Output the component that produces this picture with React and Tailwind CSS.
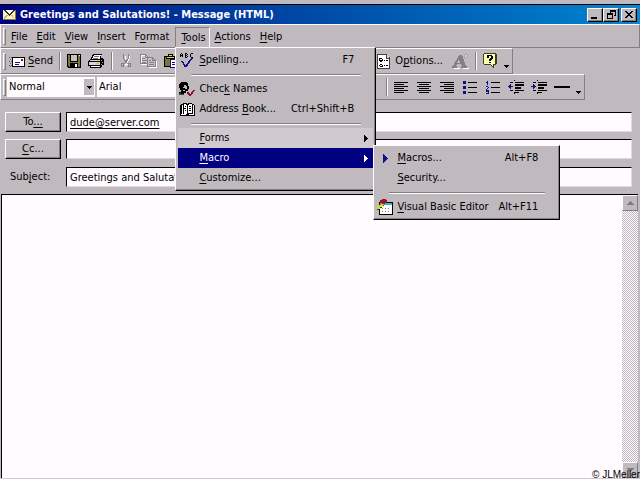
import React from "react";

const U = ({ children }) => <span className="underline underline-offset-2">{children}</span>;

const raised = "border border-t-[#fffbff] border-l-[#fffbff] border-r-[#808080] border-b-[#808080]";
const popup =
  "absolute z-10 border border-t-[#fffbff] border-l-[#fffbff] border-r-black border-b-black bg-[#c0babf] p-[2px] shadow-[inset_-1px_-1px_0_#808080]";

function Svg({ w, h, children, className = "" }) {
  return (
    <svg width={w} height={h} viewBox={`0 0 ${w} ${h}`} shapeRendering="crispEdges" fill="none" aria-hidden="true" className={`shrink-0 ${className}`}>
      {children}
    </svg>
  );
}

const MailIcon = () => (
  <Svg w={14} h={12}>
    <path d="M0 1h13v10H0z" fill="#fff4b8" />
    <path d="M1 1h11v1h-1v1h-1v1H9v1H8v1H7v1H6V6H5V5H4V4H3V3H2V2H1z" fill="#303030" />
    <path d="M3 1h7v1H9v1H8v1H7v1H6V4H5V3H4V2H3z" fill="#fff" />
    <path d="M0 10h13v1H0zM12 1h1v10h-1z" fill="#807850" />
    <path d="M1 9.500 4.500 6M11.500 9.500 8.500 6" stroke="#b8b080" />
  </Svg>
);
const SendIcon = () => (
  <Svg w={17} h={13}>
    <path d="M0 2h1M2 2h1M1 4h1M0 6h1M2 6h1M1 8h1M0 10h1M2 10h1M1 11h1" stroke="#606060" />
    <path d="M3 2h13v10H3z" fill="#000" />
    <path d="M4 3h11v8H4z" fill="#fff" />
    <path d="M12 4h2v2h-2z" fill="#b00020" />
    <path d="M6 7h5v1H6zM6 9h4v1H6z" fill="#101090" />
  </Svg>
);
const SaveIcon = () => (
  <Svg w={14} h={14}>
    <path d="M0 0h14v14H1v-1H0z" fill="#000" />
    <path d="M1 1h12v12H2v-1H1z" fill="#78783c" />
    <path d="M3 0h8v8H3z" fill="#000" />
    <path d="M4 1h6v6H4z" fill="#c8c2c7" />
    <path d="M3 9h8v5H3z" fill="#000" />
    <path d="M8 10h2v3H8zM12 1h1v1h-1z" fill="#fff" />
  </Svg>
);
const PrintIcon = () => (
  <Svg w={17} h={15}>
    <path d="M5 0h9v1h-1v3h2v1h1v6h-2v2h-1v1H2v-2H0V7h1V6h1V5h1V3h1V1h1z" fill="#000" />
    <path d="M6 1h7v1h-1v3H4V4h1V2h1z" fill="#fff" />
    <path d="M6 2h5v1H6zM5 4h5v1H5z" fill="#707070" />
    <path d="M2 6h10v1H2zM1 8h11v3H1z" fill="#d8d4d8" />
    <path d="M13 6h1v1h-1zM14 8h1v1h-1zM13 10h1v1h-1z" fill="#a0a0a0" />
    <path d="M3 12h9v1H3z" fill="#fff" />
    <path d="M8 9h3v1H8z" fill="#d8c800" />
  </Svg>
);
const CutIcon = () => (
  <Svg w={12} h={15}>
    <path d="M4 1v3l2 4 2-4V1M6 8l-2 3M6 8l2 3" stroke="#fff" transform="translate(1 1)" />
    <path d="M3.500 0v4L6 8l2.500-4V0M6 8l-3 3M6 8l3 3" stroke="#858085" />
    <path d="M1.500 9.500h2v3h-2zM8.500 9.500h2v3h-2z" stroke="#858085" />
  </Svg>
);
const CopyIcon = () => (
  <Svg w={17} h={14}>
    <path d="M1.500 1.500h5l3 3v6h-8z" fill="#d0cacf" stroke="#fff" />
    <path d="M.5.5h5l3 3v6h-8zM5.500.5v3h3" stroke="#858085" />
    <path d="M2 4h3M2 6h5M2 8h4" stroke="#858085" />
    <path d="M8.500 4.500h5l3 3v6h-8z" fill="#fff" />
    <path d="M7.500 3.500h5l3 3v6h-8z" fill="#c8c2c7" stroke="#858085" />
    <path d="M12.500 3.500v3h3M9 6.500h2M9 8.500h5M9 10.500h5" stroke="#858085" />
  </Svg>
);
const PasteIcon = () => (
  <Svg w={15} h={14}>
    <path d="M0 2h13v11H0z" fill="#000" />
    <path d="M1 3h11v9H1z" fill="#78783c" />
    <path d="M4 0h5v2h2v3H2V2h2z" fill="#000" />
    <path d="M5 1h3v1H5zM3 3h7v1H3z" fill="#e8e040" />
    <path d="M6 5h8v9H6z" fill="#101080" />
    <path d="M7 6h6v7H7z" fill="#fff" />
    <path d="M8 8h4v1H8zM8 10h4v1H8z" fill="#101080" />
  </Svg>
);
const OptionsIcon = () => (
  <Svg w={14} h={15}>
    <path d="M0 0h10v1h1v1h1v1h1v12H0z" fill="#404040" />
    <path d="M1 1h8v4h3v9H1z" fill="#fff" />
    <path d="M10 1h1v1h1v2h-2z" fill="#d8d4d8" />
    <path d="M2 4h3v1h1v2H5v1H3V7H2zM3 10h2v1h1v2H3v-1H2v-1h1z" fill="#000" />
    <path d="M3 5h2v1H3zM3 11h2v1H3z" fill="#fff" />
    <path d="M7 6h1v1H7zM9 6h2v1H9zM7 11h1v1H7zM9 11h2v1H9z" fill="#000" />
  </Svg>
);
const StyleIcon = () => (
  <Svg w={17} h={15}>
    <path d="M2 14h6v1H2zM11 14h6v1h-6zM8 4h1v1H8z" fill="#fff" />
    <path d="M7 1h3l4 11h1v2H9v-2h1l-1-2H5l-1 2h1v2H0v-2h1z" fill="#858085" />
    <path d="M7 5 5 9h3z" fill="#c0babf" />
    <path d="M13 0h2v1h1v2h-1v1h-2V3h-1V1h1z" fill="#a09aa0" />
    <path d="M13 1h2v2h-2z" fill="#e0dae0" />
  </Svg>
);
const HelpIcon = () => (
  <Svg w={14} h={16}>
    <path d="M1 0h12v1h1v10h-1v1h-2v3h-1v-1H9v-1H8v-1H1v-1H0V1h1z" fill="#404020" />
    <path d="M1 1h11v10h-2v2H9v-1H8v-1H1z" fill="#ffffb0" />
    <path d="M4 2h5v1h1v3H9v1H8v1H6V6h1V5h1V3H6v2H4zM6 9h2v1H6z" fill="#000" />
  </Svg>
);
const Caret = ({ className = "" }) => (
  <Svg w={5} h={3} className={className}>
    <path d="M0 0h5v1H4v1H3v1H2V2H1V1H0z" fill="#000" />
  </Svg>
);
const lines = (a) => a.map(([x, y, w], i) => <path key={i} d={`M${x} ${y}h${w}v1h-${w}z`} fill="#000" />);
const AlignIcon = ({ kind }) => (
  <Svg w={14} h={11}>
    {lines([0, 1, 2, 3, 4, 5].map((i) => {
      const w = i % 2 ? 10 : 14;
      const x = kind === "left" ? 0 : kind === "right" ? 14 - w : (14 - w) / 2;
      return [x, i * 2, w];
    }))}
  </Svg>
);
const BulletIcon = () => (
  <Svg w={14} h={13}>
    <path d="M0 0h3v3H0zM0 5h3v3H0zM0 10h3v3H0z" fill="#101080" />
    {lines([[5, 1, 9], [5, 6, 9], [5, 11, 9]])}
  </Svg>
);
const NumberIcon = () => (
  <Svg w={14} h={13}>
    <path d="M1 0h1v4H1zM0 1h1v1H0zM0 5h2v1h1v1H2v1H1v1h2v1H0V8h1V7h1V6H0zM0 10h3v3H0v-1h2v-1H0z" fill="#101080" />
    {lines([[5, 1, 9], [5, 6, 9], [5, 11, 9]])}
  </Svg>
);
const IndentIcon = ({ out }) => (
  <Svg w={16} h={14}>
    <path d="M6 0h1v1H6zM6 12h1v2H6z" fill="#000" />
    {lines([[2, 2, 3], [7, 2, 9], [7, 4, 9], [7, 5, 9], [7, 7, 6], [7, 8, 6], [2, 10, 3], [7, 10, 9], [7, 12, 4]])}
    <path d={out ? "M0 6h1V5h1V4h1v2h2v1H3v2H2V8H1V7H0z" : "M5 6H4V5H3V4H2v2H0v1h2v2h1V8h1V7h1z"} fill="#101080" />
  </Svg>
);
const SpellIcon = () => (
  <Svg w={15} h={16}>
    <path d="M0 2h1v3H0zM1 1h1v1H1zM2 2h1v3H2zM1 3h1v1H1zM5 1h2v1H5zM5 1h1v4H5zM7 2h1v1H7zM5 3h2v1H5zM7 4h1v1H7zM5 5h2v1H5zM11 1h2v1h-2zM10 2h1v3h-1zM11 5h2v1h-2z" fill="#000" />
    <path d="M1 9h2v1h1v2h1v1h1v-1h1v-1h1V9h1V8h1V7h1V6h2v1h-1v1h-1v1h-1v2H9v1H8v2H7v1H4v-2H3v-2H2v-1H1z" fill="#101088" />
  </Svg>
);
const NamesIcon = () => (
  <Svg w={17} h={15}>
    <path d="M2 0h6v1h1v3h1v3H9v2H7v2H5v1H2v-1H0v-1h2V8H1V6H0V2h1V1h1z" fill="#000" />
    <path d="M5 3h2v1h1v3H6V6H4V5h1zM4 8h2v1H4z" fill="#c0babf" />
    <path d="M0 11h2v1h3v1H0z" fill="#404040" />
    <path d="M8 10h2v1h1v1h1v-2h1V9h1V8h2v1h-1v1h-1v2h-1v1h-1v1h-2v-1H9v-1H8z" fill="#901028" />
  </Svg>
);
const BookIcon = () => (
  <Svg w={15} h={13}>
    <path d="M1 1h2V0h4v1h1V0h4v1h2v1h1v11H0V2h1z" fill="#000" />
    <path d="M2 2h1v9H2zM4 1h2v1h1v9H4zM8 2h1V1h3v9H8zM13 2h1v9h-1z" fill="#fff" />
    <path d="M5 3h1v1H5zM4 5h2v1H4zM5 7h1v1H5zM9 3h2v1H9zM9 5h2v1H9zM9 7h2v1H9z" fill="#000" />
    <path d="M1 11h5v1H1zM9 11h5v1H9z" fill="#fff" />
  </Svg>
);
const VbIcon = () => (
  <Svg w={16} h={16}>
    <path d="M2 3h14v13H2z" fill="#000" />
    <path d="M3 4h12v2H3z" fill="#30b0d8" />
    <path d="M3 6h12v9H3z" fill="#fff" />
    <path d="M5 9h1v1H5zM8 9h1v1H8zM11 9h1v1h-1zM5 12h1v1H5zM8 12h1v1H8zM11 12h1v1h-1z" fill="#808080" />
    <path d="M3 1h2V0h4v1h1v3H8v1H5V4H3z" fill="#a01020" />
    <path d="M0 7h2V6h2V5h3v2H5v1H3v2H0z" fill="#e0d820" />
    <path d="M0 10h2v1H0zM3 8h2v1H3zM6 6h1v1H6z" fill="#205020" />
  </Svg>
);
const PlayIcon = () => (
  <Svg w={5} h={9}>
    <path d="M0 0h1v1h1v1h1v1h1v1h1v1H4v1H3v1H2v1H1v1H0z" fill="#101088" />
  </Svg>
);
const SubArrow = () => (
  <Svg w={4} h={7}>
    <path d="M0 0h1v1h1v1h1v1h1v1H3v1H2v1H1v1H0z" fill="currentColor" />
  </Svg>
);

const Sep = () => <div className="mr-px ml-[3px] h-[18px] w-[2px] shrink-0 border-l border-[#808080] bg-[#fffbff]" />;
const Handle = () => <div className={`h-[17px] w-[3px] shrink-0 ${raised}`} />;

function IconButton({ label, children, className = "" }) {
  return (
    <button type="button" aria-label={label} className={`flex h-[22px] w-[23px] shrink-0 items-center justify-center ${className}`}>
      {children}
    </button>
  );
}

function MenuItem({ icon, children, keys, arrow, active, light }) {
  return (
    <button
      type="button"
      role="menuitem"
      className={`flex h-5 w-full items-center pr-[5px] text-left whitespace-nowrap ${active ? "bg-[#000080] text-[#fffbff]" : light ? "bg-[#d0cacf]" : ""}`}
    >
      <span className="flex w-[21px] shrink-0 pl-px pr-1 justify-center">{icon}</span>
      <span className="flex-1">{children}</span>
      {keys && <span className="pr-[14px]">{keys}</span>}
      {arrow && <SubArrow />}
    </button>
  );
}
const MenuSep = () => (
  <div className="flex h-[9px] items-center pr-3 pl-[13px]">
    <div className="h-[2px] w-full border-t border-[#808080] bg-[#fffbff]" />
  </div>
);

const winBtn =
  "flex h-[14px] w-[16px] items-center justify-center border border-t-[#fffbff] border-l-[#fffbff] border-r-black border-b-black bg-[#c0babf] shadow-[inset_-1px_-1px_0_#808080]";
const field =
  "h-5 min-w-0 flex-1 border border-t-black border-l-black border-r-[#e0dae0] border-b-[#e0dae0] bg-[#fffbff] px-[3px] focus:outline-none";
const fieldBtn =
  "h-5 w-14 border border-t-[#fffbff] border-l-[#fffbff] border-r-black border-b-black bg-[#c0babf] shadow-[inset_-1px_-1px_0_#808080]";

function Combo({ label, value, className }) {
  return (
    <div className={`relative flex h-5 shrink-0 bg-[#fffbff] ${className}`}>
      <select aria-label={label} defaultValue={value} className="h-5 w-full appearance-none bg-transparent px-[2px]">
        <option>{value}</option>
      </select>
      <span className="pointer-events-none absolute top-[2px] right-px flex h-4 w-[10px] items-center justify-center bg-[#c0babf]">
        <Caret />
      </span>
    </div>
  );
}

function ScrollButton({ label, down }) {
  return (
    <button type="button" aria-label={label} className={`flex h-4 w-4 items-center justify-center bg-[#c0babf] ${raised}`}>
      <Svg w={7} h={4}>
        <path d={down ? "M0 0h7v1H6v1H5v1H4v1H3V3H2V2H1V1H0z" : "M3 0h1v1h1v1h1v1h1v1H0V3h1V2h1V1h1z"} fill="#807a80" />
      </Svg>
    </button>
  );
}

const plainMenu = "h-5 pr-1 pl-[5px]";

export default function App() {
  return (
    <div className="relative flex min-h-screen flex-col bg-[#c0babf] font-['DejaVu_Sans_Condensed','DejaVu_Sans',sans-serif] text-[11px] leading-[14px] text-black">
      <header className="mt-1 flex h-5 items-center border-t border-black bg-linear-to-r from-[#000080] to-[#1084d0] pr-[3px] pl-[3px]">
        <MailIcon />
        <h1 className="flex-1 pl-[3px] text-[11px] font-bold text-[#fffbff]">Greetings and Salutations! - Message (HTML)</h1>
        <button type="button" aria-label="Minimize" className={winBtn}>
          <Svg w={8} h={8}><path d="M0 6h6v2H0z" fill="#000" /></Svg>
        </button>
        <button type="button" aria-label="Restore" className={winBtn}>
          <Svg w={9} h={9}>
            <path d="M3 0h6v6H7V5h1V2H4v1H3zM0 3h6v6H0z" fill="#000" />
            <path d="M1 5h4v3H1z" fill="#c0babf" />
          </Svg>
        </button>
        <button type="button" aria-label="Close" className={`ml-[2px] ${winBtn}`}>
          <Svg w={8} h={7}>
            <path d="M0 0h2v1h1v1h2V1h1V0h2v1H7v1H6v1H5v1h1v1h1v1h1v1H6V6H5V5H3v1H2v1H0V6h1V5h1V4h1V3H2V2H1V1H0z" fill="#000" />
          </Svg>
        </button>
      </header>

      <nav className={`flex h-6 items-end pl-[2px] ${raised}`} aria-label="Menu bar">
        <div className="mb-[2px]"><Handle /></div>
        <button type="button" className={plainMenu}><U>F</U>ile</button>
        <button type="button" className={plainMenu}><U>E</U>dit</button>
        <button type="button" className={plainMenu}><U>V</U>iew</button>
        <button type="button" className={plainMenu}><U>I</U>nsert</button>
        <button type="button" className={plainMenu}>F<U>o</U>rmat</button>
        <div className="relative ml-[2px]">
          <button type="button" aria-expanded="true" className="h-5 border border-b-0 border-t-[#808080] border-l-[#808080] border-r-[#fffbff] pt-px pr-[3px] pl-[5px]">
            <U>T</U>ools
          </button>
          <div role="menu" aria-label="Tools" className={`top-full left-0 w-[201px] ${popup}`}>
            <MenuItem icon={<SpellIcon />} keys="F7"><U>S</U>pelling...</MenuItem>
            <MenuSep />
            <MenuItem icon={<NamesIcon />}>Chec<U>k</U> Names</MenuItem>
            <MenuItem icon={<BookIcon />} keys="Ctrl+Shift+B">Address <U>B</U>ook...</MenuItem>
            <MenuSep />
            <MenuItem light arrow><U>F</U>orms</MenuItem>
            <div className="relative">
              <MenuItem active arrow><U>M</U>acro</MenuItem>
              <div role="menu" aria-label="Macro" className={`-top-[3px] left-full w-[187px] ${popup}`}>
                <MenuItem icon={<PlayIcon />} keys="Alt+F8"><U>M</U>acros...</MenuItem>
                <MenuItem><U>S</U>ecurity...</MenuItem>
                <MenuSep />
                <MenuItem icon={<VbIcon />} keys="Alt+F11"><U>V</U>isual Basic Editor</MenuItem>
              </div>
            </div>
            <MenuItem><U>C</U>ustomize...</MenuItem>
          </div>
        </div>
        <button type="button" className={plainMenu}><U>A</U>ctions</button>
        <button type="button" className={plainMenu}><U>H</U>elp</button>
      </nav>

      <div role="toolbar" aria-label="Standard" className={`flex h-[26px] w-[513px] items-center pl-[2px] ${raised}`}>
        <Handle />
        <button type="button" className="flex h-[22px] w-[50px] shrink-0 items-center gap-[2px] pl-[3px]">
          <SendIcon />
          <span><U>S</U>end</span>
        </button>
        <Sep />
        <IconButton label="Save"><SaveIcon /></IconButton>
        <IconButton label="Print"><PrintIcon /></IconButton>
        <Sep />
        <IconButton label="Cut"><CutIcon /></IconButton>
        <IconButton label="Copy"><CopyIcon /></IconButton>
        <IconButton label="Paste"><PasteIcon /></IconButton>
        <div className="flex-1" />
        <button type="button" className="flex h-[22px] shrink-0 items-center gap-1">
          <OptionsIcon />
          <span>O<U>p</U>tions...</span>
        </button>
        <IconButton label="Font style" className="ml-[6px]"><StyleIcon /></IconButton>
        <Sep />
        <IconButton label="Help"><HelpIcon /></IconButton>
        <button type="button" aria-label="More buttons" className="flex h-[22px] w-[11px] items-end justify-center pb-1"><Caret /></button>
      </div>

      <div role="toolbar" aria-label="Formatting" className={`flex h-[26px] w-[585px] items-center pl-[2px] ${raised}`}>
        <Handle />
        <Combo label="Style" value="Normal" className="ml-px w-[88px]" />
        <Combo label="Font" value="Arial" className="ml-[2px] w-[140px]" />
        <div className="flex-1" />
        <Sep />
        <IconButton label="Align left"><AlignIcon kind="left" /></IconButton>
        <IconButton label="Center"><AlignIcon kind="center" /></IconButton>
        <IconButton label="Align right"><AlignIcon kind="right" /></IconButton>
        <IconButton label="Bullets"><BulletIcon /></IconButton>
        <IconButton label="Numbering"><NumberIcon /></IconButton>
        <IconButton label="Decrease indent"><IndentIcon out /></IconButton>
        <IconButton label="Increase indent"><IndentIcon /></IconButton>
        <IconButton label="Horizontal line"><Svg w={16} h={2}><path d="M0 0h16v2H0z" fill="#000" /></Svg></IconButton>
        <button type="button" aria-label="More buttons" className="flex h-[22px] w-[11px] items-end justify-center pb-1"><Caret /></button>
      </div>

      <form className="flex flex-col gap-[7px] pt-[12px] pr-2 pb-[7px] pl-[5px]">
        <div className="flex gap-[5px]">
          <button type="button" className={fieldBtn}>To<U>...</U></button>
          <input aria-label="To" defaultValue="dude@server.com" className={`underline underline-offset-2 ${field}`} />
        </div>
        <div className="flex gap-[5px]">
          <button type="button" className={fieldBtn}><U>C</U>c...</button>
          <input aria-label="Cc" className={field} />
        </div>
        <div className="flex items-center gap-[5px] pt-px">
          <label htmlFor="subject" className="w-14 pl-[5px]">Sub<U>j</U>ect:</label>
          <input id="subject" defaultValue="Greetings and Salutations!" className={field} />
        </div>
      </form>

      <main className="mr-[2px] ml-px flex flex-1 border-t border-l border-black bg-[#fffbff]">
        <textarea aria-label="Message body" className="flex-1 resize-none bg-transparent p-1 outline-none" />
        <div className="flex w-4 flex-col justify-between bg-[repeating-conic-gradient(#c0babf_0_25%,#fffbff_0_50%)] bg-size-[2px_2px]">
          <ScrollButton label="Scroll up" />
          <ScrollButton label="Scroll down" down />
        </div>
      </main>
      <div className="h-[2px] border-t border-[#d0cacf] bg-[#fffbff]" />
      <small className="absolute right-0 bottom-0 font-['Liberation_Sans',sans-serif] text-[10px] leading-[10px]">© JLMeller</small>
    </div>
  );
}
